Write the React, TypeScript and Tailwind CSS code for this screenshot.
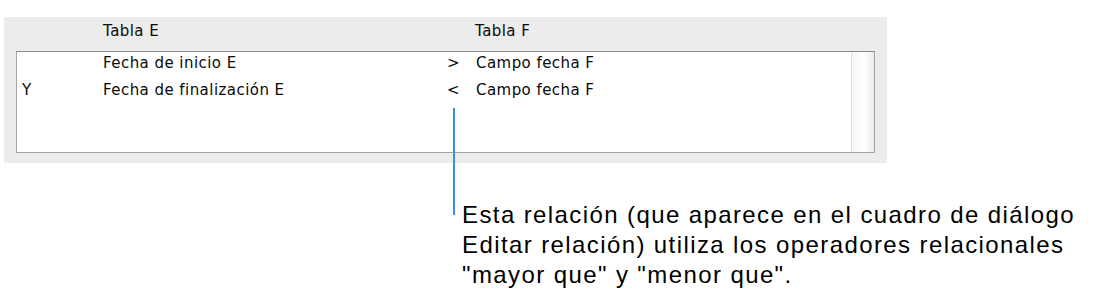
export default function App() {
  const rows = [
    { join: "", left: "Fecha de inicio E", op: ">", right: "Campo fecha F" },
    { join: "Y", left: "Fecha de finalización E", op: "<", right: "Campo fecha F" },
  ];

  return (
    <div className="relative w-[1102px] h-[303px] bg-white overflow-hidden">
      {/* Relation panel */}
      <div className="ml-[4px] pt-[17px]">
        <div className="w-[883px] h-[146px] bg-[#ececec] px-[12px] text-[15px] tracking-[0.45px] text-[#0a0a0a] font-['DejaVu_Sans',sans-serif]">
          <div className="grid grid-cols-[87px_344px_29px_1fr] h-[34px] pb-[5px] items-center">
            <span />
            <span>Tabla E</span>
            <span />
            <span className="-ml-px">Tabla F</span>
          </div>
          <div className="flex h-[102px] bg-white border border-[#a5a5a5] border-t-[#8a8a8a]">
            <div className="flex-1">
              {rows.map((r, i) => (
                <div
                  key={i}
                  className="grid grid-cols-[86px_344px_29px_1fr] h-[27px] leading-[22px]"
                >
                  <span className="pl-[5px]">{r.join}</span>
                  <span>{r.left}</span>
                  <span>{r.op}</span>
                  <span>{r.right}</span>
                </div>
              ))}
            </div>
            <div className="w-[23px] border-l border-[#dcdcdc] bg-gradient-to-r from-[#f4f4f4] via-white to-[#ececec]" />
          </div>
        </div>
      </div>

      {/* Callout */}
      <div className="absolute left-[453px] top-[108px] w-[2px] h-[107px] bg-[#3a8ee6]" />
      <p className="absolute left-[462px] top-[200px] text-[24px] leading-[30px] tracking-[1.4px] text-black font-['Liberation_Sans',Arial,sans-serif] whitespace-nowrap">
        Esta relación (que aparece en el cuadro de diálogo
        <br />
        Editar relación) utiliza los operadores relacionales
        <br />
        "mayor que" y "menor que".
      </p>
    </div>
  );
}
